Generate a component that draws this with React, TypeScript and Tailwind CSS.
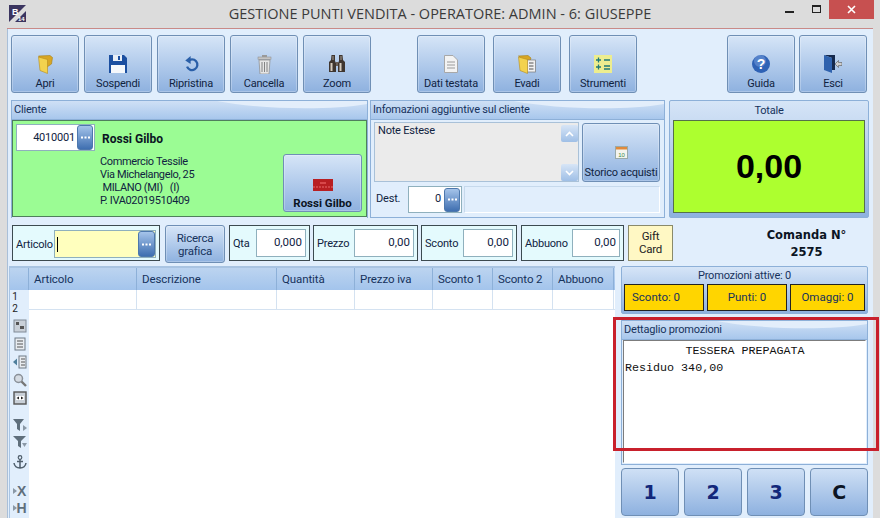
import React from 'react'

const btn =
  'rounded-[3px] border border-[#6f8fb5] bg-linear-to-b from-[#d6e5f7] to-[#8eb1df] shadow-[inset_0_0_0_1px_rgba(255,255,255,0.25)]'

function ToolButton({ label, icon, className = '' }: { label: string; icon: React.ReactNode; className?: string }) {
  return (
    <div className={`${btn} w-[68px] h-[58px] flex flex-col items-center justify-end pb-[1px] text-[11px] leading-[14px] text-[#10233f] ${className}`}>
      <div className="h-[20px] w-[20px] mb-[3px] flex items-center justify-center">{icon}</div>
      <span className="whitespace-nowrap">{label}</span>
    </div>
  )
}

function DotsButton({ className = '' }: { className?: string }) {
  return (
    <div className={`rounded-[3px] border border-[#4d78ad] bg-linear-to-b from-[#a5c4ea] to-[#3f6fb0] flex items-center justify-center text-white shrink-0 ${className}`}>
      <svg width="9" height="3" viewBox="0 0 9 3" fill="#fff">
        <rect x="0" y="0.5" width="2" height="2" />
        <rect x="3.5" y="0.5" width="2" height="2" />
        <rect x="7" y="0.5" width="2" height="2" />
      </svg>
    </div>
  )
}

function PanelHeader({ title }: { title: string }) {
  return (
    <div className="relative h-[19px] shrink-0 overflow-hidden bg-linear-to-b from-[#cfe0f5] to-[#a8c7ec] border-b border-[#8db0d8] text-[11px] leading-[18px] text-[#16325c] px-[2px]">
      <svg className="absolute right-0 top-0" width="150" height="9" viewBox="0 0 150 9" preserveAspectRatio="none">
        <path d="M0 0 C40 8 110 10 150 3 L150 0 Z" fill="#e3eefb" />
      </svg>
      <span className="relative">{title}</span>
    </div>
  )
}

function FieldBox({ label, value, width, inputWidth }: { label: string; value: string; width: string; inputWidth: string }) {
  return (
    <div className={`${width} h-[36px] border border-[#3c4a50] bg-[#e4fafd] flex items-start justify-between pl-[3px] pr-[3px] pt-[3px] text-[11px] text-[#10233f]`}>
      <span className="leading-[30px]">{label}</span>
      <div className={`${inputWidth} h-[28px] border border-[#8fb0bd] bg-white text-right pr-[3px] leading-[24px] text-[11.5px] tracking-normal`}>{value}</div>
    </div>
  )
}

function NumKey({ label, dark = false }: { label: string; dark?: boolean }) {
  return (
    <div className={`rounded-[4px] border border-[#6f8fb5] bg-linear-to-b from-[#cfe0f5] to-[#8eb1df] h-[48px] flex-1 flex items-center justify-center text-[19px] font-bold [font-family:'DejaVu_Sans',sans-serif] ${dark ? 'text-[#0b1423]' : 'text-[#12277a]'}`}>
      {label}
    </div>
  )
}

function StripIcon({ children, mt }: { children: React.ReactNode; mt: string }) {
  return (
    <svg className={`${mt} shrink-0`} width="14" height="14" viewBox="0 0 14 14">
      {children}
    </svg>
  )
}

const FolderIcon = (
  <svg width="15" height="19" viewBox="0 0 15 19">
    <path d="M0.5 1 L12 0.5 L14.5 2.5 L13.5 9 L9 12 Z" fill="#d8a624" stroke="#a67f17" strokeWidth="0.6" />
    <path d="M0.5 2 L9.5 4.5 V18.5 L2 15.5 Z" fill="#f3d24e" stroke="#b58c1c" strokeWidth="0.6" />
  </svg>
)

const columns = [
  { name: 'Articolo', w: 'w-[108px]' },
  { name: 'Descrizione', w: 'w-[140px]' },
  { name: 'Quantità', w: 'w-[78px]' },
  { name: 'Prezzo iva', w: 'w-[78px]' },
  { name: 'Sconto 1', w: 'w-[60px]' },
  { name: 'Sconto 2', w: 'w-[60px]' },
  { name: 'Abbuono', w: 'w-[61px]' },
]

export default function App() {
  return (
    <div className="relative w-[880px] h-[518px] overflow-hidden bg-[#dcdcdc] tracking-[-0.2px] [font-family:'Roboto','Noto_Sans',sans-serif]">
      {/* Title bar */}
      <div className="relative h-[28px] flex items-center justify-center text-[14.5px] tracking-normal text-[#3a3a3a] [font-family:'Open_Sans',sans-serif]">
        <svg className="absolute left-[9px] top-[5px]" width="17" height="17" viewBox="0 0 17 17">
          <path d="M0 0 H17 L0 17 Z" fill="#3b3560" />
          <path d="M17 17 H6 L17 6 Z" fill="#3b3560" />
          <text x="3" y="10" fontSize="9" fontWeight="bold" fill="#fff" fontFamily="Liberation Sans">B</text>
          <text x="9" y="16" fontSize="6" fontWeight="bold" fill="#fff" fontFamily="Liberation Sans">14</text>
        </svg>
        <span>GESTIONE PUNTI VENDITA - OPERATORE: ADMIN - 6: GIUSEPPE</span>
        <div className="absolute right-[6px] top-0 flex items-start">
          <div className="w-[9px] h-[2px] bg-[#222] mt-[11px] mr-[18px]" />
          <div className="w-[9px] h-[8px] border border-[#222] border-t-2 mt-[5px] mr-[8px]" />
          <div className="w-[45px] h-[19px] bg-[#c75050] flex items-center justify-center">
            <svg width="9" height="9" viewBox="0 0 9 9" stroke="#fff" strokeWidth="1.6">
              <path d="M1 1 L8 8 M8 1 L1 8" />
            </svg>
          </div>
        </div>
      </div>

      {/* Window body */}
      <div className="mx-[7px] h-[490px] border-t border-[#c98a88] bg-[#e1eefc] shadow-[inset_1px_0_0_#a9bfd8]">
        {/* Toolbar */}
        <div className="flex pt-[6px] pl-[4px] h-[71px]">
          <div className="flex gap-[5px]">
            <ToolButton label="Apri" icon={FolderIcon} />
            <ToolButton
              label="Sospendi"
              icon={
                <svg width="18" height="18" viewBox="0 0 18 18">
                  <path d="M0 0 H15 L18 3 V18 H0 Z" fill="#1c4fa0" />
                  <rect x="4" y="0" width="9" height="6" fill="#e8eef6" />
                  <rect x="9" y="1" width="2" height="4" fill="#1c4fa0" />
                  <rect x="2" y="10" width="14" height="8" fill="#f6f8fb" />
                </svg>
              }
            />
            <ToolButton
              label="Ripristina"
              icon={
                <svg width="15" height="16" viewBox="0 0 16 18" fill="none">
                  <path d="M4 6 A6 6 0 1 1 3 12" stroke="#2a5fa8" strokeWidth="2.6" />
                  <path d="M7 0 V9 L1 5 Z" fill="#2a5fa8" />
                </svg>
              }
            />
            <ToolButton
              label="Cancella"
              icon={
                <svg width="15" height="19" viewBox="0 0 15 19">
                  <rect x="1" y="2" width="13" height="2.5" fill="#c4c4c4" stroke="#888" strokeWidth="0.5" />
                  <rect x="5" y="0" width="5" height="2" fill="#999" />
                  <path d="M2 5 H13 L12 19 H3 Z" fill="#e6e6e6" stroke="#888" strokeWidth="0.7" />
                  <path d="M5 7 V17 M7.5 7 V17 M10 7 V17" stroke="#777" strokeWidth="0.9" />
                </svg>
              }
            />
            <ToolButton
              label="Zoom"
              icon={
                <svg width="18" height="18" viewBox="0 0 18 18">
                  <path d="M3.5 0 H7 V6 L8 8 V17 H1 V7 L3 5 Z" fill="#3f3630" />
                  <path d="M11 0 H14.5 L15 5 L17 7 V17 H10 V8 L11 6 Z" fill="#3f3630" />
                  <rect x="8" y="7" width="2" height="4" fill="#6b6058" />
                  <rect x="2.5" y="8" width="2" height="8" fill="#d6ccbf" />
                  <rect x="11.5" y="8" width="2" height="8" fill="#d6ccbf" />
                  <rect x="4.5" y="1" width="1" height="4" fill="#a89c90" />
                  <rect x="12.5" y="1" width="1" height="4" fill="#a89c90" />
                </svg>
              }
            />
          </div>
          <div className="flex gap-[8px] ml-[46px]">
            <ToolButton
              label="Dati testata"
              icon={
                <svg width="14" height="18" viewBox="0 0 14 18">
                  <path d="M0.5 0.5 H9 L13.5 5 V17.5 H0.5 Z" fill="#f3f3f3" stroke="#a8a8a8" />
                  <path d="M3 7 H11 M3 10 H11 M3 13 H11" stroke="#9a9a9a" />
                </svg>
              }
            />
            <ToolButton
              label="Evadi"
              icon={
                <svg width="18" height="19" viewBox="0 0 18 19">
                  <path d="M0.5 1 L10 0.5 L13 3 L12 6 L9 8 Z" fill="#d8a624" stroke="#a67f17" strokeWidth="0.6" />
                  <rect x="9" y="5" width="8.5" height="12" fill="#f1f1f1" stroke="#777" strokeWidth="0.7" />
                  <path d="M11 8 H15.5 M11 11 H15.5 M11 14 H15.5" stroke="#555" />
                  <path d="M0.5 2 L9.5 4.5 V18.5 L2 15.5 Z" fill="#f3d24e" stroke="#b58c1c" strokeWidth="0.6" />
                </svg>
              }
            />
            <ToolButton
              label="Strumenti"
              icon={
                <svg width="18" height="18" viewBox="0 0 18 18">
                  <rect width="18" height="18" fill="#eded8f" />
                  <path d="M2 5 H7 M4.5 2.5 V7.5 M10 5 H16 M2 12 H7 M4.5 9.5 V14.5 M10 11 H16 M10 14 H16" stroke="#1f7a77" strokeWidth="1.3" />
                </svg>
              }
            />
          </div>
          <div className="flex gap-[4px] ml-[90px]">
            <ToolButton
              label="Guida"
              icon={
                <svg width="18" height="18" viewBox="0 0 18 18">
                  <circle cx="9" cy="9" r="9" fill="#2f62b5" />
                  <circle cx="8" cy="6" r="6" fill="#6f97d8" opacity="0.6" />
                  <text x="9" y="14" textAnchor="middle" fontSize="14" fontWeight="bold" fill="#fff" fontFamily="Liberation Sans">?</text>
                </svg>
              }
            />
            <ToolButton
              label="Esci"
              icon={
                <svg width="18" height="18" viewBox="0 0 18 18">
                  <path d="M0 0 H11 V15 H8 V3 Z" fill="#15294d" />
                  <path d="M0 0 L8 3 V18 L0 15 Z" fill="#2f62ae" />
                  <path d="M11 9 L14.5 5.5 V7.5 H18 V10.5 H14.5 V12.5 Z" fill="#cfcfcf" stroke="#555" strokeWidth="0.6" />
                </svg>
              }
            />
          </div>
        </div>

        {/* Customer row */}
        <div className="flex pl-[4px] h-[125px]">
          <div className="w-[357px] h-[118px] border border-[#8db0d8] border-b-0 flex flex-col">
            <PanelHeader title="Cliente" />
            <div className="h-[97px] border border-[#4f7f5c] bg-[#9bfc94] pl-[3px] pt-[3px] flex flex-col relative text-[11px] text-[#10233f]">
              <div className="flex items-center">
                <div className="w-[79px] h-[27px] border border-[#8fb0bd] bg-white flex items-center justify-end">
                  <span className="mr-[2px] mt-[1px]">4010001</span>
                  <DotsButton className="w-[16px] h-[25px] mr-[1px]" />
                </div>
                <span className="ml-[7px] mt-[3px] font-bold text-[12px] tracking-normal text-[#0b1423]">Rossi Gilbo</span>
              </div>
              <div className="ml-[84px] mt-[4px] leading-[13px] tracking-[-0.35px] whitespace-pre">
                <div>Commercio Tessile</div>
                <div>Via Michelangelo, 25</div>
                <div> MILANO (MI)   (I)</div>
                <div>P. IVA02019510409</div>
              </div>
              <div className={`${btn} absolute right-[4px] bottom-[4px] w-[79px] h-[58px] flex flex-col items-center justify-end pb-[1px]`}>
                <svg className="mb-[5px]" width="20" height="12" viewBox="0 0 20 12">
                  <rect width="20" height="12" fill="#b81f22" />
                  <path d="M0 8 H20" stroke="#e86a6a" strokeDasharray="2 1" />
                  <rect x="7" y="3" width="6" height="2" fill="#d8484a" />
                </svg>
                <span className="font-bold text-[11.5px] leading-[14px] tracking-normal text-[#0b1423]">Rossi Gilbo</span>
              </div>
            </div>
          </div>

          <div className="w-[295px] h-[118px] ml-[2px] border border-[#8db0d8] flex flex-col">
            <PanelHeader title="Infomazioni aggiuntive sul cliente" />
            <div className="flex-1 flex flex-col pl-[3px] pt-[2px] text-[11px] text-[#10233f]">
              <div className="flex">
                <div className="relative w-[205px] h-[60px] border border-[#a9c1d8] bg-[#ebebeb] pl-[3px] leading-[16px]">
                  Note Estese
                  <div className="absolute right-0 top-[2px] w-[17px] h-[17px] rounded-[2px] bg-linear-to-b from-[#d7e5f6] to-[#9fbfe6] flex items-center justify-center">
                    <svg width="9" height="6" viewBox="0 0 9 6" fill="none" stroke="#fff" strokeWidth="1.6"><path d="M1 5 L4.5 1.5 L8 5" /></svg>
                  </div>
                  <div className="absolute right-0 bottom-0 w-[17px] h-[17px] rounded-[2px] bg-linear-to-b from-[#d7e5f6] to-[#9fbfe6] flex items-center justify-center">
                    <svg width="9" height="6" viewBox="0 0 9 6" fill="none" stroke="#fff" strokeWidth="1.6"><path d="M1 1 L4.5 4.5 L8 1" /></svg>
                  </div>
                </div>
                <div className={`${btn} ml-[3px] mt-[1px] w-[78px] h-[59px] flex flex-col items-center justify-end pb-[1px]`}>
                  <svg className="mb-[7px]" width="13" height="13" viewBox="0 0 13 13">
                    <rect x="0.5" y="0.5" width="12" height="12" fill="#f4f4ee" stroke="#9aa" />
                    <rect x="1" y="1" width="11" height="2.5" fill="#e08a3c" />
                    <text x="6.5" y="10.5" textAnchor="middle" fontSize="6" fill="#3a8a4a" fontFamily="Liberation Sans">10</text>
                  </svg>
                  <span className="whitespace-nowrap text-[11px] leading-[14px]">Storico acquisti</span>
                </div>
              </div>
              <div className="flex items-center mt-[4px]">
                <span className="w-[34px] pl-[2px]">Dest.</span>
                <div className="w-[54px] h-[27px] border border-[#8fb0bd] bg-white flex items-center justify-end">
                  <span className="mr-[3px]">0</span>
                  <DotsButton className="w-[16px] h-[24px] mr-[1px]" />
                </div>
                <div className="w-[196px] h-[27px] ml-[2px] border border-[#c6d9ec] border-b-white border-r-white" />
              </div>
            </div>
          </div>

          <div className="w-[200px] h-[118px] ml-[4px] rounded-[2px] border border-[#8db0d8] bg-linear-to-b from-[#d6e5f7] to-[#8eb1df] flex flex-col items-center">
            <div className="h-[19px] text-[11px] leading-[19px] text-[#16325c]">Totale</div>
            <div className="w-[192px] h-[93px] border border-[#55704a] bg-[#adff2f] flex items-center justify-center text-[34px] tracking-normal font-bold text-black [font-family:'Liberation_Sans',sans-serif]">
              0,00
            </div>
          </div>
        </div>

        {/* Entry row */}
        <div className="flex h-[41px] pl-[5px] items-start">
          <div className="w-[148px] h-[36px] border border-[#3c4a50] bg-[#e4fafd] flex items-start justify-between pl-[3px] pr-[3px] pt-[4px] text-[11px] text-[#10233f]">
            <span className="leading-[30px]">Articolo</span>
            <div className="w-[102px] h-[28px] border border-[#8fb0bd] bg-[#ffffbe] flex items-center justify-between pl-[2px]">
              <div className="w-[1px] h-[15px] bg-black" />
              <DotsButton className="w-[17px] h-[26px]" />
            </div>
          </div>
          <div className={`${btn} ml-[5px] w-[60px] h-[38px] flex items-center justify-center text-center text-[11.5px] pt-[1px] leading-[13px] text-[#16325c]`}>
            Ricerca
            <br />
            grafica
          </div>
          <div className="ml-[4px]">
            <FieldBox label="Qta" value="0,000" width="w-[81px]" inputWidth="w-[50px]" />
          </div>
          <div className="ml-[3px]">
            <FieldBox label="Prezzo" value="0,00" width="w-[105px]" inputWidth="w-[60px]" />
          </div>
          <div className="ml-[3px]">
            <FieldBox label="Sconto" value="0,00" width="w-[96px]" inputWidth="w-[50px]" />
          </div>
          <div className="ml-[4px]">
            <FieldBox label="Abbuono" value="0,00" width="w-[103px]" inputWidth="w-[48px]" />
          </div>
          <div className="ml-[4px] w-[45px] h-[36px] shrink-0 border border-[#8a8a6a] bg-[#fff8c4] flex items-center justify-center text-center text-[11.5px] leading-[13px] text-[#222]">
            Gift
            <br />
            Card
          </div>
          <div className="flex-1 pl-[67px] pt-[2px] text-center text-[11.5px] tracking-normal font-bold leading-[17px] text-[#0b1423] [font-family:'DejaVu_Sans',sans-serif]">
            Comanda N°
            <br />
            2575
          </div>
        </div>

        {/* Lower area */}
        <div className="flex">
          {/* Grid */}
          <div className="ml-[2px] w-[606px] h-[252px] shrink-0 border-t-2 border-l border-[#a9c4e2] flex flex-col">
            <div className="flex h-[22px] bg-linear-to-b from-[#bcd4f0] to-[#a3c4ec] text-[11.5px] leading-[22px] tracking-[-0.1px] text-[#16325c]">
              <div className="w-[19px] border-r border-[#8db0d8]" />
              {columns.map((c) => (
                <div key={c.name} className={`${c.w} border-r border-[#8db0d8] pl-[5px]`}>
                  {c.name}
                </div>
              ))}
            </div>
            <div className="flex flex-1 min-h-0">
              <div className="w-[19px] shrink-0 bg-[#e1eefc] flex flex-col items-center text-[10px] leading-[12px] text-[#222]">
                <div className="mt-[1px] -ml-[9px]">1</div>
                <div className="-ml-[9px] mb-[4px]">2</div>
                <StripIcon mt="mt-0">
                  <rect x="1" y="1" width="12" height="12" fill="#c9d0d8" stroke="#808a96" />
                  <rect x="3" y="3" width="3" height="3" fill="#555" />
                  <rect x="7" y="7" width="4" height="3" fill="#555" />
                </StripIcon>
                <StripIcon mt="mt-[4px]">
                  <rect x="2" y="1" width="10" height="12" fill="#e8ecf0" stroke="#6f7a86" />
                  <path d="M4 4 H10 M4 7 H10 M4 10 H10" stroke="#555" />
                </StripIcon>
                <StripIcon mt="mt-[4px]">
                  <rect x="6" y="1" width="7" height="12" fill="#e8ecf0" stroke="#6f7a86" />
                  <path d="M8 4 H12 M8 7 H12 M8 10 H12" stroke="#555" />
                  <path d="M0 7 L4 3.5 V10.5 Z" fill="#4f7f9c" />
                </StripIcon>
                <StripIcon mt="mt-[4px]">
                  <circle cx="5.5" cy="5.5" r="4" fill="#d5dbe2" stroke="#8a9098" strokeWidth="1.5" />
                  <path d="M8.5 8.5 L13 13" stroke="#777" strokeWidth="2.4" />
                </StripIcon>
                <StripIcon mt="mt-[4px]">
                  <rect x="1" y="1" width="12" height="12" fill="#c9d0d8" stroke="#555" strokeWidth="1.4" />
                  <rect x="3" y="5" width="8" height="4" fill="#fff" />
                  <path d="M3.5 7 L6 5.5 V8.5 Z M10.5 7 L8 5.5 V8.5 Z" fill="#222" />
                </StripIcon>
                <StripIcon mt="mt-[13px]">
                  <path d="M0 1 H11 L7 6 V13 L4 11 V6 Z" fill="#5f6f7c" />
                  <path d="M10 7 L14 10 L10 13 Z" fill="#8a98a6" />
                </StripIcon>
                <StripIcon mt="mt-[3px]">
                  <path d="M0 1 H13 L8 6 V13 L5 11 V6 Z" fill="#5f6f7c" />
                  <path d="M9 8 H14 L11.5 12 Z" fill="#8a98a6" />
                </StripIcon>
                <StripIcon mt="mt-[6px]">
                  <circle cx="7" cy="2.5" r="1.8" fill="none" stroke="#4f5e6b" strokeWidth="1.2" />
                  <path d="M7 4 V13 M4 6.5 H10 M1 8 C1.5 11 4 13 7 13 C10 13 12.5 11 13 8" fill="none" stroke="#4f5e6b" strokeWidth="1.5" />
                </StripIcon>
                <div className="mt-[15px] flex items-center text-[#5f6f7c] font-bold text-[14px] leading-[14px] [font-family:'Liberation_Sans',sans-serif]">
                  <svg width="4" height="6" viewBox="0 0 4 6"><path d="M0 0 L4 3 L0 6 Z" fill="#8a98a6" /></svg>X
                </div>
                <div className="mt-[3px] flex items-center text-[#5f6f7c] font-bold text-[14px] leading-[14px] [font-family:'Liberation_Sans',sans-serif]">
                  <svg width="4" height="6" viewBox="0 0 4 6"><path d="M0 0 L4 3 L0 6 Z" fill="#8a98a6" /></svg>H
                </div>
              </div>
              <div className="flex-1 bg-white">
                <div className="flex h-[20px] border-b border-[#d4e2f1]">
                  {columns.map((c) => (
                    <div key={c.name} className={`${c.w} border-r border-[#d4e2f1]`} />
                  ))}
                </div>
              </div>
            </div>
          </div>

          {/* Right column */}
          <div className="ml-[6px] w-[247px]">
            <div className="h-[48px] rounded-[2px] border border-[#8db0d8] bg-linear-to-b from-[#d6e5f7] to-[#8eb1df] px-[2px]">
              <div className="h-[17px] text-center text-[11px] leading-[18px] text-[#16325c]">Promozioni attive: 0</div>
              <div className="flex gap-[3px] text-[11.5px] tracking-normal text-[#16325c]">
                <div className="w-[80px] h-[27px] border border-[#222] bg-[#ffd500] pl-[7px] leading-[25px]">Sconto: 0</div>
                <div className="w-[80px] h-[27px] border border-[#222] bg-[#ffd500] text-center leading-[25px]">Punti: 0</div>
                <div className="flex-1 h-[27px] border border-[#222] bg-[#ffd500] text-center leading-[25px]">Omaggi: 0</div>
              </div>
            </div>
            <div className="mt-[6px] h-[145px] border border-[#8db0d8] flex flex-col">
              <PanelHeader title="Dettaglio promozioni" />
              <div className="flex-1 mx-[1px] mb-[1px] border border-[#7c7c7c] border-b-white border-r-white bg-white text-[11.7px] tracking-normal leading-[16px] pt-[2px] pl-[1px] text-[#111] [font-family:'Liberation_Mono',monospace] whitespace-pre">
                <div className="text-center">TESSERA PREPAGATA</div>
                <div className="mt-[1px]">Residuo 340,00</div>
              </div>
            </div>
            <div className="mt-[3px] flex gap-[5px]">
              <NumKey label="1" />
              <NumKey label="2" />
              <NumKey label="3" />
              <NumKey label="C" dark />
            </div>
          </div>
        </div>
      </div>

      {/* Red highlight drawn over the screenshot */}
      <div className="absolute left-[613px] top-[317px] w-[266px] h-[134px] border-[3px] border-[#c8202c]" />
    </div>
  )
}
